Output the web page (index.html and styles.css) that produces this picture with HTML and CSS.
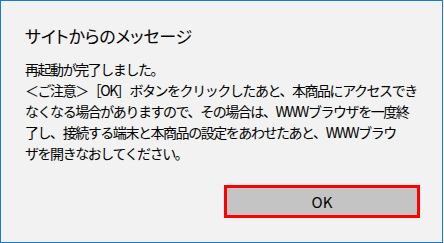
FILE: index.html
```html
<!DOCTYPE html>
<html lang="ja">
<head>
    <meta charset="UTF-8">
    <title>サイトからのメッセージ</title>
    <link rel="stylesheet" href="styles.css">
</head>
<body>
    <div class="dialog">
        <h1 class="title">サイトからのメッセージ</h1>
        <p class="message">再起動が完了しました。<br>＜ご注意＞［OK］ボタンをクリックしたあと、本商品にアクセスでき<br>なくなる場合がありますので、その場合は、WWWブラウザを一度終<br>了し、接続する端末と本商品の設定をあわせたあと、WWWブラウ<br>ザを開きなおしてください。</p>
        <div class="buttons">
            <button class="ok-btn">OK</button>
        </div>
    </div>
</body>
</html>
```

FILE: styles.css
```css
body {
    margin: 0;
    font-family: "Noto Sans CJK JP", "Noto Sans", sans-serif;
    color: #000;
    background-color: #f2f2f2;
}
.dialog {
    box-sizing: border-box;
    width: 443px;
    height: 243px;
    border: 1px solid #1979ca;
    background-color: #f2f2f2;
    padding: 21px 22px 0 24px;
    display: flex;
    flex-direction: column;
}
.title {
    margin: 0;
    font-size: 17px;
    font-weight: normal;
    line-height: 28px;
    letter-spacing: -0.2px;
    font-feature-settings: "palt";
}
.message {
    margin: 9px 0 0;
    font-size: 14px;
    line-height: 21px;
    letter-spacing: -1.45px;
    white-space: nowrap;
}
.buttons {
    margin-top: auto;
    margin-bottom: 24px;
    display: flex;
    justify-content: flex-end;
}
.ok-btn {
    width: 196px;
    height: 33px;
    background-color: #c4c4c4;
    border: 3px solid #ff0000;
    font-family: inherit;
    font-size: 15px;
    color: #000;
    padding: 0;
}
```
